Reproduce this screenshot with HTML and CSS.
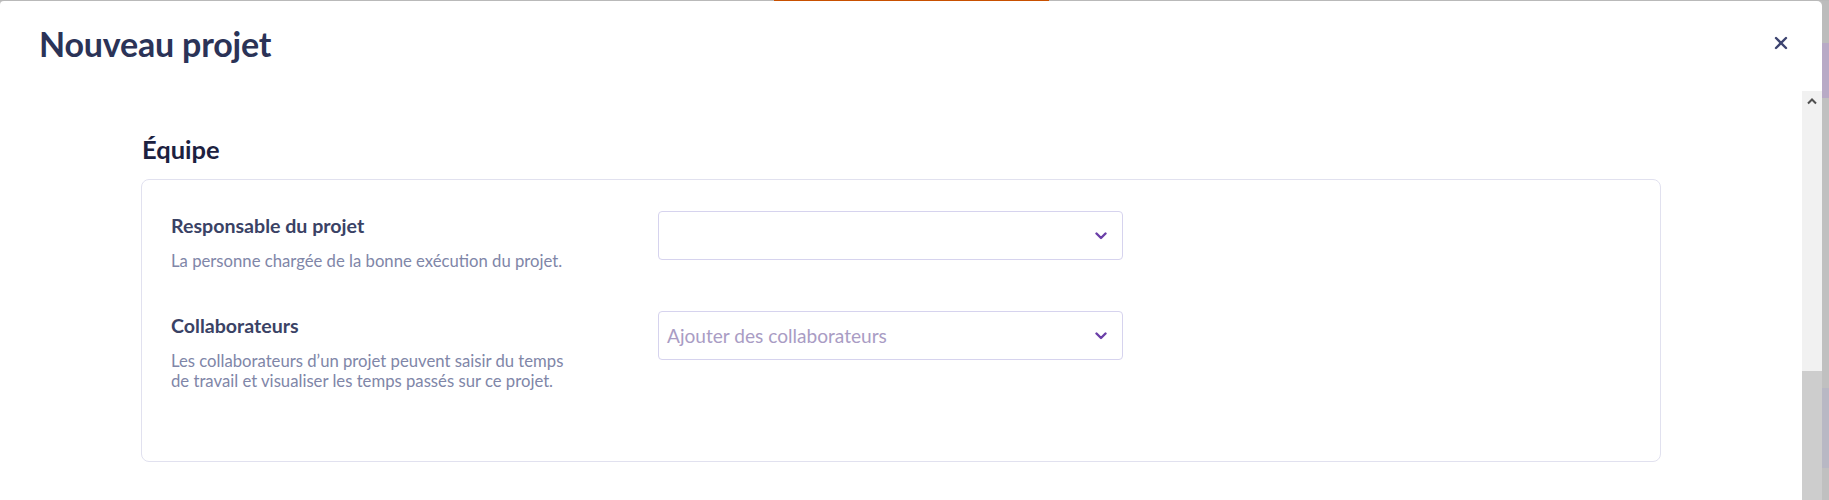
FILE: index.html
```html
<!DOCTYPE html>
<html lang="fr">
<head>
<meta charset="utf-8">
<title>Nouveau projet</title>
<link rel="stylesheet" href="styles.css">
</head>
<body>
<div class="topline"><span class="seg-gray"></span><span class="seg-orange"></span><span class="seg-gray2"></span></div>
<div class="stage">
  <div class="modal">
    <header class="modal-header">
      <h1 class="modal-title">Nouveau projet</h1>
      <button class="close" aria-label="Fermer">
        <svg width="14" height="14" viewBox="0 0 14 14"><path d="M2 2 L12 12 M12 2 L2 12" stroke="#3d4470" stroke-width="2.4" stroke-linecap="round" fill="none"/></svg>
      </button>
    </header>
    <div class="modal-body">
      <div class="content">
        <h2 class="section-title">Équipe</h2>
        <section class="card">
          <div class="field">
            <div class="field-info">
              <div class="field-label">Responsable du projet</div>
              <p class="field-desc">La personne chargée de la bonne exécution du projet.</p>
            </div>
            <div class="select">
              <span class="select-value"></span>
              <svg class="chevron" width="12" height="8" viewBox="0 0 12 8"><path d="M1.5 1.5 L6 6 L10.5 1.5" stroke="#6b3fa8" stroke-width="2.4" stroke-linecap="round" stroke-linejoin="round" fill="none"/></svg>
            </div>
          </div>
          <div class="field">
            <div class="field-info">
              <div class="field-label">Collaborateurs</div>
              <p class="field-desc">Les collaborateurs d’un projet peuvent saisir du temps de travail et visualiser les temps passés sur ce projet.</p>
            </div>
            <div class="select">
              <span class="select-placeholder">Ajouter des collaborateurs</span>
              <svg class="chevron" width="12" height="8" viewBox="0 0 12 8"><path d="M1.5 1.5 L6 6 L10.5 1.5" stroke="#6b3fa8" stroke-width="2.4" stroke-linecap="round" stroke-linejoin="round" fill="none"/></svg>
            </div>
          </div>
        </section>
      </div>
      <div class="scrollbar">
        <div class="sb-up">
          <svg width="10" height="7" viewBox="0 0 10 7"><path d="M1 5.5 L5 1.5 L9 5.5" stroke="#505050" stroke-width="2" fill="none"/></svg>
        </div>
        <div class="sb-track"></div>
        <div class="sb-thumb"></div>
      </div>
    </div>
  </div>
  <div class="edge">
    <div class="edge-a"></div>
    <div class="edge-b"></div>
    <div class="edge-c"></div>
    <div class="edge-d"></div>
    <div class="edge-e"></div>
  </div>
</div>
</body>
</html>
```

FILE: styles.css
```css
* { box-sizing: border-box; }
html, body { margin: 0; padding: 0; }
body {
  width: 1829px;
  height: 500px;
  overflow: hidden;
  background: #c0c0c0;
  font-family: Lato, "Noto Sans", sans-serif;
  display: flex;
  flex-direction: column;
}
.topline { display: flex; height: 1px; flex: none; }
.seg-gray { width: 774px; background: #b9b9b9; }
.seg-orange { width: 275px; background: #c85000; }
.seg-gray2 { flex: 1; background: #b9b9b9; }

.stage { display: flex; flex: 1; min-height: 0; }
.modal {
  width: 1822px;
  flex: none;
  background: #fff;
  border-radius: 4px 5px 0 0;
  display: flex;
  flex-direction: column;
  overflow: hidden;
}
.modal-header {
  display: flex;
  align-items: center;
  justify-content: space-between;
  height: 90px;
  padding: 23px 34px 27px 39px;
  flex: none;
}
.modal-title {
  margin: 0;
  font-size: 34px;
  line-height: 40px;
  font-weight: 700;
  color: #2b3357;
  letter-spacing: -0.2px;
}
.close {
  border: 0;
  background: none;
  padding: 0;
  width: 14px;
  height: 14px;
  margin-top: -2px;
  display: flex;
  cursor: pointer;
}
.modal-body { display: flex; flex: 1; min-height: 0; }
.content { flex: 1; padding: 0 141px; }
.section-title {
  margin: 44px 0 16px 1px;
  font-size: 25.5px;
  line-height: 28px;
  font-weight: 700;
  color: #1c2140;
}
.card {
  border: 1px solid #e1e1ef;
  border-radius: 8px;
  padding: 31px 0 70px 29px;
  display: flex;
  flex-direction: column;
  gap: 40px;
}
.field {
  display: grid;
  grid-template-columns: 487px 465px;
  align-items: start;
}
.field-info { padding-top: 3px; width: 405px; }
.field-label {
  font-size: 19.6px;
  line-height: 24px;
  font-weight: 700;
  color: #3a4265;
}
.field-desc {
  margin: 13px 0 0;
  font-size: 16.7px;
  line-height: 20px;
  color: #8086a8;
}
.select {
  height: 49px;
  border: 1px solid #d6d3ee;
  border-radius: 4px;
  display: flex;
  align-items: center;
  justify-content: space-between;
  padding: 0 15px 0 8px;
}
.select-placeholder {
  font-size: 19.1px;
  color: #a99cc4;
}
.chevron { display: block; }

.scrollbar {
  width: 20px;
  flex: none;
  display: flex;
  flex-direction: column;
  background: #f1f1f1;
}
.sb-up {
  height: 20px;
  display: flex;
  align-items: center;
  justify-content: center;
}
.sb-track { height: 260px; }
.sb-thumb { flex: 1; background: #cdcdcd; }

.edge { flex: 1; display: flex; flex-direction: column; }
.edge-a { height: 42px; background: #bcbcbc; }
.edge-b { height: 55px; background: #b8aac6; }
.edge-c { height: 290px; background: #c0c0c0; }
.edge-d { height: 80px; background: #b8b8c4; }
.edge-e { flex: 1; background: #c0c0c0; }
```
